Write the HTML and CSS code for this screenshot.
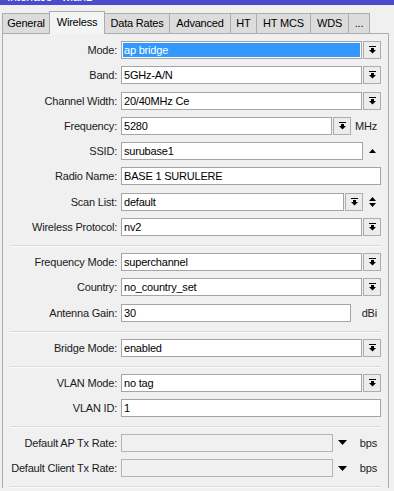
FILE: index.html
```html
<!DOCTYPE html>
<html lang="en">
<head>
    <meta charset="UTF-8">
    <title>Interface &lt;wlan1&gt;</title>
    <link rel="stylesheet" href="styles.css">
</head>
<body>
    <div class="titlebar"><span>Interface &lt;wlan1&gt;</span></div>
    <div class="tabs">
        <div class="tab" style="width:48px">General</div>
        <div class="tab active" style="width:56px">Wireless</div>
        <div class="tab" style="width:66px">Data Rates</div>
        <div class="tab" style="width:62px">Advanced</div>
        <div class="tab" style="width:27px">HT</div>
        <div class="tab" style="width:55px">HT MCS</div>
        <div class="tab" style="width:39px">WDS</div>
        <div class="tab" style="width:22px">...</div>
    </div>
    <div class="panel">
        <div class="section">
            <div class="row">
                <label>Mode:</label>
                <div class="field">
                    <div class="input"><span class="selected">ap bridge</span></div>
                    <div class="btn"><svg width="7" height="8" viewBox="0 0 7 8"><rect x="0" y="0" width="7" height="1"/><rect x="2" y="2" width="3" height="2"/><polygon points="0,4 7,4 3.5,7.5"/></svg></div>
                </div>
            </div>
            <div class="row">
                <label>Band:</label>
                <div class="field">
                    <div class="input">5GHz-A/N</div>
                    <div class="btn"><svg width="7" height="8" viewBox="0 0 7 8"><rect x="0" y="0" width="7" height="1"/><rect x="2" y="2" width="3" height="2"/><polygon points="0,4 7,4 3.5,7.5"/></svg></div>
                </div>
            </div>
            <div class="row">
                <label>Channel Width:</label>
                <div class="field">
                    <div class="input">20/40MHz Ce</div>
                    <div class="btn"><svg width="7" height="8" viewBox="0 0 7 8"><rect x="0" y="0" width="7" height="1"/><rect x="2" y="2" width="3" height="2"/><polygon points="0,4 7,4 3.5,7.5"/></svg></div>
                </div>
            </div>
            <div class="row">
                <label>Frequency:</label>
                <div class="field">
                    <div class="input">5280</div>
                    <div class="btn"><svg width="7" height="8" viewBox="0 0 7 8"><rect x="0" y="0" width="7" height="1"/><rect x="2" y="2" width="3" height="2"/><polygon points="0,4 7,4 3.5,7.5"/></svg></div>
                    <div class="unit">MHz</div>
                </div>
            </div>
            <div class="row">
                <label>SSID:</label>
                <div class="field">
                    <div class="input">surubase1</div>
                    <div class="slot"><svg width="7" height="4" viewBox="0 0 7 4"><polygon points="0,4 7,4 3.5,0"/></svg></div>
                </div>
            </div>
            <div class="row">
                <label>Radio Name:</label>
                <div class="field">
                    <div class="input">BASE 1 SURULERE</div>
                </div>
            </div>
            <div class="row">
                <label>Scan List:</label>
                <div class="field">
                    <div class="input">default</div>
                    <div class="btn"><svg width="7" height="8" viewBox="0 0 7 8"><rect x="0" y="0" width="7" height="1"/><rect x="2" y="2" width="3" height="2"/><polygon points="0,4 7,4 3.5,7.5"/></svg></div>
                    <div class="slot"><svg width="7" height="10" viewBox="0 0 7 10"><polygon points="0,4 7,4 3.5,0"/><polygon points="0,6 7,6 3.5,10"/></svg></div>
                </div>
            </div>
            <div class="row">
                <label>Wireless Protocol:</label>
                <div class="field">
                    <div class="input">nv2</div>
                    <div class="btn"><svg width="7" height="8" viewBox="0 0 7 8"><rect x="0" y="0" width="7" height="1"/><rect x="2" y="2" width="3" height="2"/><polygon points="0,4 7,4 3.5,7.5"/></svg></div>
                </div>
            </div>
        </div>
        <div class="separator"></div>
        <div class="section">
            <div class="row">
                <label>Frequency Mode:</label>
                <div class="field">
                    <div class="input">superchannel</div>
                    <div class="btn"><svg width="7" height="8" viewBox="0 0 7 8"><rect x="0" y="0" width="7" height="1"/><rect x="2" y="2" width="3" height="2"/><polygon points="0,4 7,4 3.5,7.5"/></svg></div>
                </div>
            </div>
            <div class="row">
                <label>Country:</label>
                <div class="field">
                    <div class="input">no_country_set</div>
                    <div class="btn"><svg width="7" height="8" viewBox="0 0 7 8"><rect x="0" y="0" width="7" height="1"/><rect x="2" y="2" width="3" height="2"/><polygon points="0,4 7,4 3.5,7.5"/></svg></div>
                </div>
            </div>
            <div class="row">
                <label>Antenna Gain:</label>
                <div class="field">
                    <div class="input">30</div>
                    <div class="unit">dBi</div>
                </div>
            </div>
        </div>
        <div class="separator"></div>
        <div class="section">
            <div class="row">
                <label>Bridge Mode:</label>
                <div class="field">
                    <div class="input">enabled</div>
                    <div class="btn"><svg width="7" height="8" viewBox="0 0 7 8"><rect x="0" y="0" width="7" height="1"/><rect x="2" y="2" width="3" height="2"/><polygon points="0,4 7,4 3.5,7.5"/></svg></div>
                </div>
            </div>
        </div>
        <div class="separator"></div>
        <div class="section">
            <div class="row">
                <label>VLAN Mode:</label>
                <div class="field">
                    <div class="input">no tag</div>
                    <div class="btn"><svg width="7" height="8" viewBox="0 0 7 8"><rect x="0" y="0" width="7" height="1"/><rect x="2" y="2" width="3" height="2"/><polygon points="0,4 7,4 3.5,7.5"/></svg></div>
                </div>
            </div>
            <div class="row">
                <label>VLAN ID:</label>
                <div class="field">
                    <div class="input">1</div>
                </div>
            </div>
        </div>
        <div class="separator"></div>
        <div class="section">
            <div class="row">
                <label>Default AP Tx Rate:</label>
                <div class="field">
                    <div class="input disabled"></div>
                    <div class="slot"><svg width="9" height="5" viewBox="0 0 9 5"><polygon points="0,0 9,0 4.5,5"/></svg></div>
                    <div class="unit">bps</div>
                </div>
            </div>
            <div class="row">
                <label>Default Client Tx Rate:</label>
                <div class="field">
                    <div class="input disabled"></div>
                    <div class="slot"><svg width="9" height="5" viewBox="0 0 9 5"><polygon points="0,0 9,0 4.5,5"/></svg></div>
                    <div class="unit">bps</div>
                </div>
            </div>
        </div>
        <div class="separator"></div>
    </div>
</body>
</html>
```

FILE: styles.css
```css
body {
    margin: 0;
    background: #f0f0f0;
    font-family: "Liberation Sans", Arial, sans-serif;
    font-size: 11px;
    letter-spacing: -0.2px;
    color: #111;
    overflow: hidden;
}
.titlebar {
    height: 5px;
    background: #4b4bcb;
    overflow: hidden;
    color: #fff;
    padding-left: 7px;
    font-size: 12px;
}
.titlebar span {
    display: block;
    line-height: 12px;
    margin-top: -9px;
}
.tabs {
    display: flex;
    align-items: flex-end;
    height: 28px;
    padding-left: 2px;
}
.tab {
    box-sizing: border-box;
    height: 20px;
    line-height: 19px;
    margin-right: -1px;
    border: 1px solid #acacac;
    border-bottom: none;
    background: #dcdcdc;
    text-align: center;
    color: #000;
}
.tab.active {
    height: 23px;
    line-height: 21px;
    margin-bottom: -1px;
    background: #f4f4f4;
    position: relative;
    z-index: 1;
}
.panel {
    box-sizing: border-box;
    margin-left: 2px;
    width: 387px;
    border: 1px solid #acacac;
    border-bottom: none;
    padding: 7px 7px 0 0;
    background: #f0f0f0;
}
.section {
    display: flex;
    flex-direction: column;
    gap: 7.3px;
}
.row {
    display: grid;
    grid-template-columns: 118px 1fr;
    align-items: center;
    height: 18px;
}
.row label {
    text-align: right;
    padding-right: 4px;
    color: #1a1a1a;
}
.field {
    display: flex;
    align-items: center;
    height: 18px;
}
.input {
    flex: 1;
    box-sizing: border-box;
    height: 18px;
    border: 1px solid #a5a5a5;
    background: #fff;
    padding: 0 2px;
    line-height: 16px;
    color: #000;
    white-space: nowrap;
    overflow: hidden;
}
.input.disabled {
    background: #f0f0f0;
    border-color: #b4b4b4;
}
.selected {
    display: block;
    margin: 1px -1px;
    padding: 0 1px;
    line-height: 14px;
    background: #3399ff;
    color: #fff;
}
.btn {
    box-sizing: border-box;
    width: 18px;
    height: 18px;
    margin-left: 1px;
    border: 1px solid #adadad;
    background: #ececec;
    display: flex;
    align-items: center;
    justify-content: center;
}
.slot {
    width: 18px;
    height: 18px;
    display: flex;
    align-items: center;
    justify-content: center;
}
.unit {
    width: 30px;
    text-align: right;
    padding-right: 4px;
    box-sizing: border-box;
    color: #222;
}
.separator {
    margin: 9px 0 6px 7px;
    height: 1px;
    background: #dadada;
    border-bottom: 1px solid #fafafa;
}
```
